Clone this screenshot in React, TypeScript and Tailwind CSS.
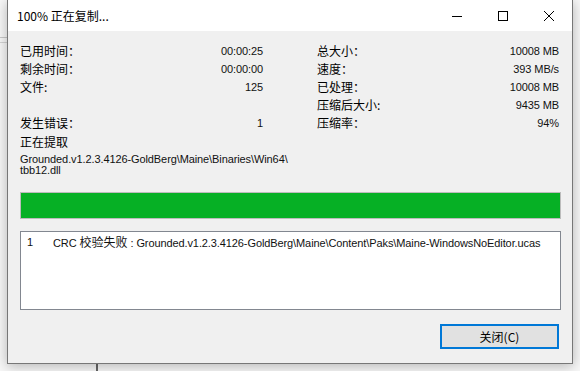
import React from "react";

const cjk = { fontFamily: '"Microsoft YaHei", "Noto Sans CJK SC", sans-serif' };
const sans = { fontFamily: '"Liberation Sans", Tahoma, "Noto Sans CJK SC", sans-serif' };

function Row({ label, value }: { label: string; value: string }) {
  return (
    <div className="flex h-[18px] items-center justify-between">
      <span className="text-[12px] leading-[18px] text-black" style={cjk}>
        {label}
      </span>
      <span className="text-[11px] leading-[18px] tracking-[-0.1px] text-[#111]" style={sans}>
        {value}
      </span>
    </div>
  );
}

export default function App() {
  return (
    <div className="relative h-[371px] w-[580px] overflow-hidden bg-[#f7f7f7]">
      {/* background window fragments */}
      <div className="absolute left-0 top-[37px] h-px w-[8px] bg-[#c8c8c8]" />
      <div className="absolute left-0 top-[42px] h-px w-[8px] bg-[#d4d4d4]" />
      <div className="absolute left-[96px] top-[360px] h-[11px] w-[2px] bg-[#666]" />

      {/* dialog window */}
      <div className="absolute left-[7px] top-0 flex h-[364px] w-[566px] flex-col border-x border-b border-[#777] bg-[#f0f0f0] shadow-[0_2px_12px_rgba(0,0,0,0.28)]">
        {/* title bar */}
        <div className="flex h-[31px] items-center bg-white">
          <div className="pl-[9px] text-[12px] text-black" style={cjk}>
            100% 正在复制...
          </div>
          <div className="ml-auto flex h-full">
            <div className="flex h-full w-[46px] items-center justify-center">
              <svg width="10" height="10" viewBox="0 0 10 10">
                <path d="M0 5.5h10" stroke="#000" strokeWidth="1" />
              </svg>
            </div>
            <div className="flex h-full w-[46px] items-center justify-center">
              <svg width="10" height="10" viewBox="0 0 10 10">
                <rect x="0.5" y="0.5" width="9" height="9" fill="none" stroke="#000" strokeWidth="1" />
              </svg>
            </div>
            <div className="flex h-full w-[46px] items-center justify-center">
              <svg width="10" height="10" viewBox="0 0 10 10">
                <path d="M0 0L10 10M10 0L0 10" stroke="#000" strokeWidth="1" />
              </svg>
            </div>
          </div>
        </div>

        {/* body */}
        <div className="flex flex-1 flex-col px-[12px] pt-[11px]">
          <div className="flex">
            <div className="flex w-[243px] flex-col">
              <Row label="已用时间：" value="00:00:25" />
              <Row label="剩余时间：" value="00:00:00" />
              <Row label="文件:" value="125" />
              <div className="h-[18px]" />
              <Row label="发生错误：" value="1" />
              <div className="mt-px h-[18px] text-[12px] leading-[18px]" style={cjk}>
                正在提取
              </div>
              <div className="mt-[3px] text-[11px] leading-[11px] tracking-[-0.1px] text-[#111]" style={sans}>
                <div className="whitespace-nowrap">Grounded.v1.2.3.4126-GoldBerg\Maine\Binaries\Win64\</div>
                <div>tbb12.dll</div>
              </div>
            </div>
            <div className="ml-[54px] flex w-[242px] flex-col">
              <Row label="总大小：" value="10008 MB" />
              <Row label="速度：" value="393 MB/s" />
              <Row label="已处理：" value="10008 MB" />
              <Row label="压缩后大小:" value="9435 MB" />
              <Row label="压缩率：" value="94%" />
            </div>
          </div>

          {/* progress bar */}
          <div className="mt-[16px] h-[27px] w-[541px] border border-[#bcbcbc] bg-[#e6e6e6]">
            <div className="h-full w-full bg-[#06b025]" />
          </div>

          {/* list box */}
          <div className="mt-[12px] h-[79px] w-[541px] border border-[#828790] bg-white">
            <div className="flex h-[20px] items-center text-[11px] tracking-[-0.1px] text-[#111]" style={sans}>
              <span className="w-[32px] pl-[6px]">1</span>
              <span className="whitespace-nowrap">
                CRC <span className="text-[12px] tracking-normal" style={cjk}>校验失败</span> : Grounded.v1.2.3.4126-GoldBerg\Maine\Content\Paks\Maine-WindowsNoEditor.ucas
              </span>
            </div>
          </div>

          {/* button */}
          <div className="mt-[14px] flex justify-end pr-[1px]">
            <div className="flex h-[25px] w-[119px] items-center justify-center border-2 border-[#0078d7] bg-[#e1e1e1] text-[12px] text-black" style={cjk}>
              关闭(C)
            </div>
          </div>
        </div>
      </div>
    </div>
  );
}
